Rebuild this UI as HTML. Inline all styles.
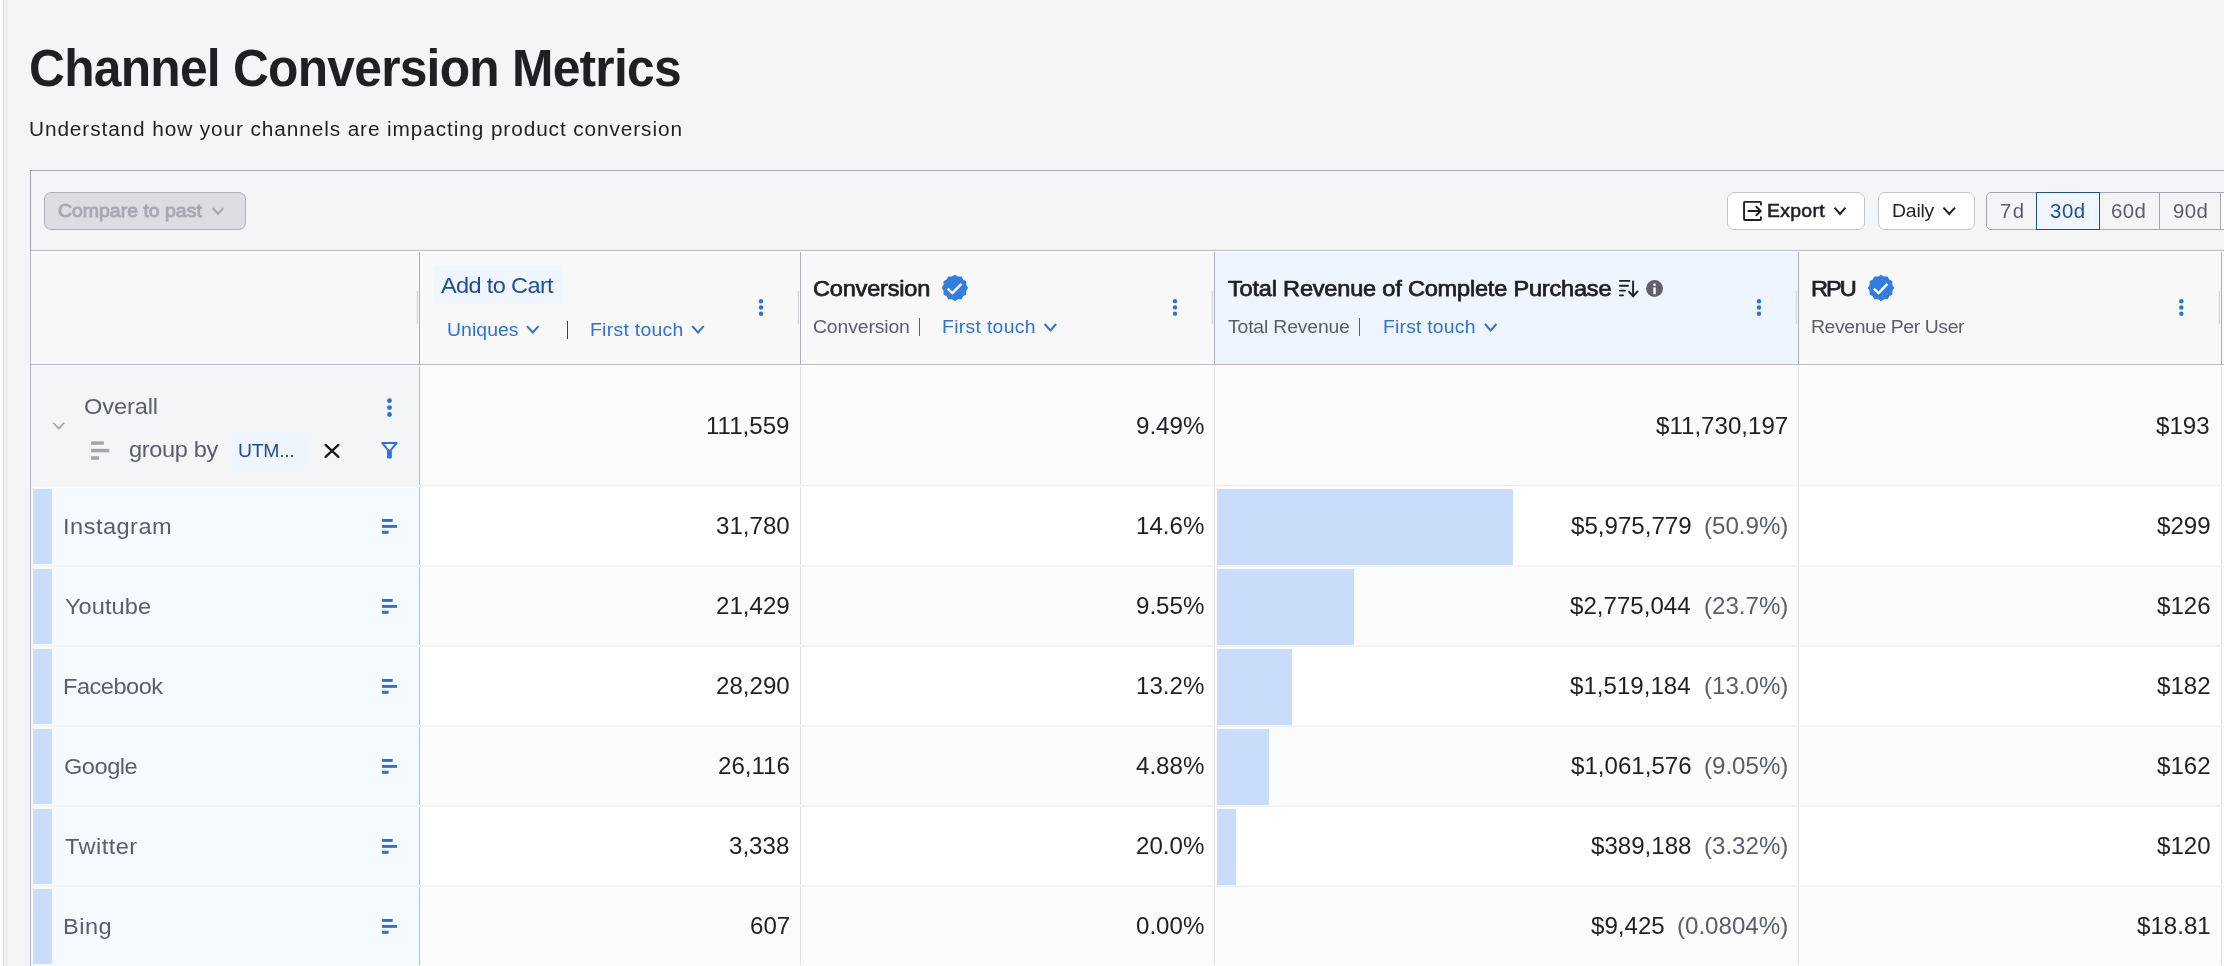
<!DOCTYPE html>
<html><head><meta charset="utf-8"><title>Channel Conversion Metrics</title>
<style>
html,body{margin:0;padding:0;overflow:hidden}
body{width:2224px;height:966px;overflow:hidden;position:relative;background:#f4f5f7;font-family:"Liberation Sans",sans-serif}
.t{position:absolute;white-space:pre;margin:0}
.r{position:absolute}
svg{position:absolute;overflow:visible}
</style></head><body><div id="app" style="position:absolute;left:0;top:0;width:2224px;height:966px;overflow:hidden;will-change:transform">
<div class="r" style="left:0px;top:0px;width:3px;height:966px;background:#ffffff;"></div>
<div class="r" style="left:3px;top:0px;width:1px;height:966px;background:#dcdde2;"></div>
<div class="r" style="left:4px;top:0px;width:4px;height:966px;background:#eff0f4;"></div>
<div class="t" style="left:29.26px;top:38.43px;font-size:51px;line-height:61px;letter-spacing:-0.774px;color:#1e2024;font-weight:700;transform:scaleX(0.975);transform-origin:0 0;">Channel Conversion Metrics</div>
<div class="t" style="left:28.90px;top:116.57px;font-size:20px;line-height:24px;letter-spacing:0.866px;color:#1e2024;transform:scaleX(1.04);transform-origin:0 0;">Understand how your channels are impacting product conversion</div>
<div class="r" style="left:30px;top:170px;width:2200px;height:1px;background:#a4a6af;"></div>
<div class="r" style="left:30px;top:170px;width:1px;height:81px;background:#a4a6af;"></div>
<div class="r" style="left:30px;top:251px;width:1px;height:720px;background:#b3b5be;"></div>
<div class="r" style="left:31px;top:250px;width:2200px;height:1px;background:#bbbdc5;"></div>
<div class="r" style="left:31px;top:251px;width:2200px;height:1px;background:#fdfdfd;"></div>
<div class="r" style="left:31px;top:252px;width:2193px;height:112px;background:#f8f8f8;"></div>
<div class="r" style="left:1215px;top:252px;width:583px;height:112px;background:#eff5fe;"></div>
<div class="r" style="left:31px;top:364px;width:2200px;height:1px;background:#bcbec7;"></div>
<div class="r" style="left:31px;top:365px;width:2200px;height:1px;background:#fefefe;"></div>
<div class="r" style="left:44px;top:192px;width:202px;height:38px;background:#dcdde2;box-sizing:border-box;border:1px solid #aeb0b9;border-radius:7px"></div>
<div class="t" style="left:58.38px;top:200.33px;font-size:18.67px;line-height:22px;letter-spacing:0.024px;color:#a6a8b2;-webkit-text-stroke:0.9px #a6a8b2;transform:scaleX(1.04);transform-origin:0 0;">Compare to past</div>
<svg style="left:0;top:0" width="1" height="1"><polyline points="212.75,208.00 218.00,214.00 223.25,208.00" fill="none" stroke="#a6a8b2" stroke-width="2" stroke-linecap="butt" stroke-linejoin="miter"/></svg>
<div class="r" style="left:1727px;top:192px;width:138px;height:38px;background:#fff;box-sizing:border-box;border:1px solid #c3c5cc;border-radius:7px"></div>
<svg style="left:0;top:0" width="1" height="1"><g fill="none" stroke="#1e2024" stroke-width="1.9" stroke-linecap="round" stroke-linejoin="round"><path d="M1760.95 204.6V202.75a0.9 0.9 0 0 0-0.9-0.9H1744.95a0.9 0.9 0 0 0-0.9 0.9V219.05a0.9 0.9 0 0 0 0.9 0.9H1760.05a0.9 0.9 0 0 0 0.9-0.9V217.2"/><path d="M1748.4 211H1760.4M1756.3 206.8L1760.7 211L1756.3 215.2"/></g></svg>
<div class="t" style="left:1766.69px;top:200.33px;font-size:18.67px;line-height:22px;letter-spacing:0.297px;color:#1e2024;-webkit-text-stroke:0.55px #1e2024;transform:scaleX(1.04);transform-origin:0 0;">Export</div>
<svg style="left:0;top:0" width="1" height="1"><polyline points="1834.50,207.60 1840.00,214.00 1845.50,207.60" fill="none" stroke="#1e2024" stroke-width="2" stroke-linecap="butt" stroke-linejoin="miter"/></svg>
<div class="r" style="left:1878px;top:192px;width:97px;height:38px;background:#fff;box-sizing:border-box;border:1px solid #c3c5cc;border-radius:7px"></div>
<div class="t" style="left:1892.01px;top:200.33px;font-size:18.67px;line-height:22px;letter-spacing:-0.199px;color:#1e2024;transform:scaleX(1.04);transform-origin:0 0;">Daily</div>
<svg style="left:0;top:0" width="1" height="1"><polyline points="1943.45,207.60 1949.20,214.00 1954.95,207.60" fill="none" stroke="#1e2024" stroke-width="2" stroke-linecap="butt" stroke-linejoin="miter"/></svg>
<div class="r" style="left:1986px;top:192px;width:240px;height:38px;background:#f4f5f7;box-sizing:border-box;border:1px solid #a4a6af;border-radius:5px 0 0 5px"></div>
<div class="r" style="left:2159px;top:193px;width:1px;height:36px;background:#a4a6af;"></div>
<div class="r" style="left:2220px;top:193px;width:1px;height:36px;background:#a4a6af;"></div>
<div class="r" style="left:2221px;top:193px;width:3px;height:36px;background:#fff;"></div>
<div class="r" style="left:2036px;top:192px;width:64px;height:38px;background:#eff6ff;box-sizing:border-box;border:1.5px solid #1f4c9c"></div>
<div class="t" style="left:1999.75px;top:198.91px;font-size:19.6px;line-height:24px;letter-spacing:1.332px;color:#5a5e6b;transform:scaleX(1.04);transform-origin:0 0;">7d</div>
<div class="t" style="left:2049.72px;top:198.91px;font-size:19.6px;line-height:24px;letter-spacing:0.567px;color:#1f4c9c;transform:scaleX(1.04);transform-origin:0 0;">30d</div>
<div class="t" style="left:2111.16px;top:198.91px;font-size:19.6px;line-height:24px;letter-spacing:0.403px;color:#5a5e6b;transform:scaleX(1.04);transform-origin:0 0;">60d</div>
<div class="t" style="left:2172.94px;top:198.91px;font-size:19.6px;line-height:24px;letter-spacing:0.365px;color:#5a5e6b;transform:scaleX(1.04);transform-origin:0 0;">90d</div>
<div class="r" style="left:419px;top:252px;width:1px;height:112px;background:#adafb8;"></div>
<div class="r" style="left:417px;top:291px;width:1px;height:33px;background:#d6d7dc;"></div>
<div class="r" style="left:416px;top:291px;width:1px;height:33px;background:#eeeef1;"></div>
<div class="r" style="left:800px;top:252px;width:1px;height:112px;background:#adafb8;"></div>
<div class="r" style="left:798px;top:291px;width:1px;height:33px;background:#d6d7dc;"></div>
<div class="r" style="left:797px;top:291px;width:1px;height:33px;background:#eeeef1;"></div>
<div class="r" style="left:1214px;top:252px;width:1px;height:112px;background:#adafb8;"></div>
<div class="r" style="left:1212px;top:291px;width:1px;height:33px;background:#d6d7dc;"></div>
<div class="r" style="left:1211px;top:291px;width:1px;height:33px;background:#eeeef1;"></div>
<div class="r" style="left:1798px;top:252px;width:1px;height:112px;background:#adafb8;"></div>
<div class="r" style="left:1796px;top:291px;width:1px;height:33px;background:#d6d7dc;"></div>
<div class="r" style="left:1795px;top:291px;width:1px;height:33px;background:#eeeef1;"></div>
<div class="r" style="left:2221px;top:252px;width:1px;height:112px;background:#adafb8;"></div>
<div class="r" style="left:2219px;top:291px;width:1px;height:33px;background:#d6d7dc;"></div>
<div class="r" style="left:2218px;top:291px;width:1px;height:33px;background:#eeeef1;"></div>
<div class="r" style="left:433px;top:265px;width:129px;height:39px;background:#eff6ff;border-radius:4px"></div>
<div class="t" style="left:441.45px;top:271.84px;font-size:22.67px;line-height:27px;letter-spacing:-0.628px;color:#1f4c9c;transform:scaleX(1.04);transform-origin:0 0;">Add to Cart</div>
<div class="t" style="left:446.50px;top:318.53px;font-size:18.67px;line-height:22px;letter-spacing:0.058px;color:#2c72de;transform:scaleX(1.04);transform-origin:0 0;">Uniques</div>
<svg style="left:0;top:0" width="1" height="1"><polyline points="527.05,326.10 532.80,332.50 538.55,326.10" fill="none" stroke="#2c72de" stroke-width="2" stroke-linecap="butt" stroke-linejoin="miter"/></svg>
<div class="r" style="left:567px;top:321px;width:1.4px;height:17.5px;background:#3f424b;"></div>
<div class="t" style="left:590.41px;top:318.53px;font-size:18.67px;line-height:22px;letter-spacing:0.261px;color:#2c72de;transform:scaleX(1.04);transform-origin:0 0;">First touch</div>
<svg style="left:0;top:0" width="1" height="1"><polyline points="692.25,326.10 698.00,332.50 703.75,326.10" fill="none" stroke="#2c72de" stroke-width="2" stroke-linecap="butt" stroke-linejoin="miter"/></svg>
<svg style="left:0;top:0" width="1" height="1"><circle cx="761" cy="301.25" r="2.2" fill="#2c72de"/><circle cx="761" cy="307.5" r="2.2" fill="#2c72de"/><circle cx="761" cy="313.75" r="2.2" fill="#2c72de"/></svg>
<div class="t" style="left:813.49px;top:274.64px;font-size:22.67px;line-height:27px;letter-spacing:-0.193px;color:#1e2024;-webkit-text-stroke:0.75px #1e2024;transform:scaleX(1.04);transform-origin:0 0;">Conversion</div>
<svg style="left:0;top:0" width="1" height="1"><polygon points="954.90,275.45 957.76,277.23 961.12,277.12 962.71,280.09 965.68,281.67 965.57,285.04 967.35,287.90 965.57,290.76 965.68,294.12 962.71,295.71 961.12,298.68 957.76,298.57 954.90,300.35 952.04,298.57 948.67,298.68 947.09,295.71 944.12,294.12 944.23,290.76 942.45,287.90 944.23,285.04 944.12,281.67 947.09,280.09 948.67,277.12 952.04,277.23" fill="#337ce0" stroke="#337ce0" stroke-width="1.3" stroke-linejoin="round"/><polyline points="947.70,288.70 952.40,293.20 961.40,283.90" fill="none" stroke="#fff" stroke-width="2.4" stroke-linejoin="round"/></svg>
<div class="t" style="left:813.31px;top:315.63px;font-size:18.67px;line-height:22px;letter-spacing:-0.135px;color:#5a5e6b;transform:scaleX(1.04);transform-origin:0 0;">Conversion</div>
<div class="r" style="left:919px;top:318px;width:1.4px;height:17.5px;background:#5a5e6b;"></div>
<div class="t" style="left:942.31px;top:315.63px;font-size:18.67px;line-height:22px;letter-spacing:0.290px;color:#2c72de;transform:scaleX(1.04);transform-origin:0 0;">First touch</div>
<svg style="left:0;top:0" width="1" height="1"><polyline points="1044.65,324.00 1050.40,330.40 1056.15,324.00" fill="none" stroke="#2c72de" stroke-width="2" stroke-linecap="butt" stroke-linejoin="miter"/></svg>
<svg style="left:0;top:0" width="1" height="1"><circle cx="1175" cy="301.15" r="2.2" fill="#2c72de"/><circle cx="1175" cy="307.4" r="2.2" fill="#2c72de"/><circle cx="1175" cy="313.65" r="2.2" fill="#2c72de"/></svg>
<div class="t" style="left:1228.46px;top:274.64px;font-size:22.67px;line-height:27px;letter-spacing:-0.197px;color:#1e2024;-webkit-text-stroke:0.75px #1e2024;transform:scaleX(1.04);transform-origin:0 0;">Total Revenue of Complete Purchase</div>
<svg style="left:1618px;top:279px" width="22" height="19" viewBox="0 0 22 19"><g stroke="#1e2024" stroke-width="1.9" fill="none" stroke-linecap="round"><path d="M1.9 1.9H11.5M1.9 6.8H10M1.9 11.6H7M1.9 16.4H5"/><path d="M15.1 1.6V17" stroke-linecap="butt"/><path d="M11 12.7L15.15 17.4L19.5 12.4" stroke-linejoin="miter"/></g></svg>
<svg style="left:0;top:0" width="1" height="1"><circle cx="1654.55" cy="288.45" r="8.45" fill="#5f626d"/><rect x="1653.3" y="287.4" width="2.5" height="6.8" fill="#fbfbfc"/><circle cx="1654.55" cy="284.7" r="1.3" fill="#fbfbfc"/></svg>
<div class="t" style="left:1228.16px;top:315.63px;font-size:18.67px;line-height:22px;letter-spacing:-0.171px;color:#5a5e6b;transform:scaleX(1.04);transform-origin:0 0;">Total Revenue</div>
<div class="r" style="left:1359px;top:318px;width:1.4px;height:17.5px;background:#5a5e6b;"></div>
<div class="t" style="left:1382.81px;top:315.63px;font-size:18.67px;line-height:22px;letter-spacing:0.184px;color:#2c72de;transform:scaleX(1.04);transform-origin:0 0;">First touch</div>
<svg style="left:0;top:0" width="1" height="1"><polyline points="1484.95,324.00 1490.70,330.40 1496.45,324.00" fill="none" stroke="#2c72de" stroke-width="2" stroke-linecap="butt" stroke-linejoin="miter"/></svg>
<svg style="left:0;top:0" width="1" height="1"><circle cx="1759" cy="301.2" r="2.2" fill="#2c72de"/><circle cx="1759" cy="307.5" r="2.2" fill="#2c72de"/><circle cx="1759" cy="313.8" r="2.2" fill="#2c72de"/></svg>
<div class="t" style="left:1811.46px;top:274.64px;font-size:22.67px;line-height:27px;letter-spacing:-1.926px;color:#1e2024;-webkit-text-stroke:0.75px #1e2024;transform:scaleX(1.04);transform-origin:0 0;">RPU</div>
<svg style="left:0;top:0" width="1" height="1"><polygon points="1881.00,275.45 1883.86,277.23 1887.22,277.12 1888.81,280.09 1891.78,281.67 1891.67,285.04 1893.45,287.90 1891.67,290.76 1891.78,294.12 1888.81,295.71 1887.22,298.68 1883.86,298.57 1881.00,300.35 1878.14,298.57 1874.78,298.68 1873.19,295.71 1870.22,294.12 1870.33,290.76 1868.55,287.90 1870.33,285.04 1870.22,281.67 1873.19,280.09 1874.78,277.12 1878.14,277.23" fill="#337ce0" stroke="#337ce0" stroke-width="1.3" stroke-linejoin="round"/><polyline points="1873.80,288.70 1878.50,293.20 1887.50,283.90" fill="none" stroke="#fff" stroke-width="2.4" stroke-linejoin="round"/></svg>
<div class="t" style="left:1811.41px;top:315.63px;font-size:18.67px;line-height:22px;letter-spacing:-0.392px;color:#5a5e6b;transform:scaleX(1.04);transform-origin:0 0;">Revenue Per User</div>
<svg style="left:0;top:0" width="1" height="1"><circle cx="2181.3" cy="301.2" r="2.2" fill="#2c72de"/><circle cx="2181.3" cy="307.5" r="2.2" fill="#2c72de"/><circle cx="2181.3" cy="313.8" r="2.2" fill="#2c72de"/></svg>
<div class="r" style="left:31px;top:366px;width:388px;height:120px;background:#f4f5f7;"></div>
<div class="r" style="left:420px;top:366px;width:1804px;height:120px;background:#fbfbfc;"></div>
<div class="r" style="left:420px;top:485px;width:1804px;height:1px;background:#edeef1;"></div>
<div class="r" style="left:31px;top:485px;width:388px;height:1px;background:#f1f2f5;"></div>
<div class="r" style="left:31px;top:487px;width:388px;height:80px;background:#f5fafe;"></div>
<div class="r" style="left:420px;top:486px;width:1804px;height:80px;background:#fff;"></div>
<div class="r" style="left:33px;top:489px;width:19px;height:75px;background:#c9dcfa;"></div>
<div class="r" style="left:1217px;top:489px;width:296px;height:76.5px;background:#c9dcfa;"></div>
<div class="t" style="left:63.12px;top:512.64px;font-size:22.67px;line-height:27px;letter-spacing:0.469px;color:#5a5e6b;transform:scaleX(1.04);transform-origin:0 0;">Instagram</div>
<svg style="left:382px;top:518.9px" width="16" height="16" viewBox="0 0 16 16"><g fill="#2a6fdb"><rect x="0" y="0" width="10.7" height="2.9"/><rect x="0" y="5.95" width="15" height="2.9"/><rect x="0" y="11.8" width="6.6" height="3"/></g></svg>
<div class="t" style="left:715.92px;top:511.89px;font-size:23.4px;line-height:28px;letter-spacing:0.000px;color:#1e2024;transform:scaleX(1.03);transform-origin:0 0;">31,780</div>
<div class="t" style="left:1135.92px;top:511.89px;font-size:23.4px;line-height:28px;letter-spacing:0.000px;color:#1e2024;transform:scaleX(1.03);transform-origin:0 0;">14.6%</div>
<div class="t" style="left:1703.70px;top:511.89px;font-size:23.4px;line-height:28px;letter-spacing:0.000px;color:#5a5e6b;transform:scaleX(1.03);transform-origin:0 0;">(50.9%)</div>
<div class="t" style="left:1570.61px;top:511.89px;font-size:23.4px;line-height:28px;letter-spacing:0.000px;color:#1e2024;transform:scaleX(1.03);transform-origin:0 0;">$5,975,779</div>
<div class="t" style="left:2156.82px;top:511.89px;font-size:23.4px;line-height:28px;letter-spacing:0.000px;color:#1e2024;transform:scaleX(1.03);transform-origin:0 0;">$299</div>
<div class="r" style="left:31px;top:566px;width:388px;height:80px;background:#f5fafe;"></div>
<div class="r" style="left:420px;top:566px;width:1804px;height:80px;background:#fbfbfb;"></div>
<div class="r" style="left:33px;top:569px;width:19px;height:75px;background:#c9dcfa;"></div>
<div class="r" style="left:1217px;top:569px;width:137px;height:76.5px;background:#c9dcfa;"></div>
<div class="r" style="left:420px;top:565px;width:1804px;height:1px;background:#f4f5f7;"></div>
<div class="r" style="left:420px;top:566px;width:1804px;height:1px;background:#f1f2f4;"></div>
<div class="r" style="left:31px;top:565px;width:388px;height:1px;background:#f2f5f9;"></div>
<div class="r" style="left:31px;top:566px;width:388px;height:1px;background:#f1f4f8;"></div>
<div class="t" style="left:64.78px;top:592.64px;font-size:22.67px;line-height:27px;letter-spacing:0.063px;color:#5a5e6b;transform:scaleX(1.04);transform-origin:0 0;">Youtube</div>
<svg style="left:382px;top:598.9px" width="16" height="16" viewBox="0 0 16 16"><g fill="#2a6fdb"><rect x="0" y="0" width="10.7" height="2.9"/><rect x="0" y="5.95" width="15" height="2.9"/><rect x="0" y="11.8" width="6.6" height="3"/></g></svg>
<div class="t" style="left:716.12px;top:591.89px;font-size:23.4px;line-height:28px;letter-spacing:0.000px;color:#1e2024;transform:scaleX(1.03);transform-origin:0 0;">21,429</div>
<div class="t" style="left:1135.92px;top:591.89px;font-size:23.4px;line-height:28px;letter-spacing:0.000px;color:#1e2024;transform:scaleX(1.03);transform-origin:0 0;">9.55%</div>
<div class="t" style="left:1703.70px;top:591.89px;font-size:23.4px;line-height:28px;letter-spacing:0.000px;color:#5a5e6b;transform:scaleX(1.03);transform-origin:0 0;">(23.7%)</div>
<div class="t" style="left:1570.17px;top:591.89px;font-size:23.4px;line-height:28px;letter-spacing:0.000px;color:#1e2024;transform:scaleX(1.03);transform-origin:0 0;">$2,775,044</div>
<div class="t" style="left:2156.74px;top:591.89px;font-size:23.4px;line-height:28px;letter-spacing:0.000px;color:#1e2024;transform:scaleX(1.03);transform-origin:0 0;">$126</div>
<div class="r" style="left:31px;top:646px;width:388px;height:80px;background:#f5fafe;"></div>
<div class="r" style="left:420px;top:646px;width:1804px;height:80px;background:#fff;"></div>
<div class="r" style="left:33px;top:649px;width:19px;height:75px;background:#c9dcfa;"></div>
<div class="r" style="left:1217px;top:649px;width:75px;height:76.5px;background:#c9dcfa;"></div>
<div class="r" style="left:420px;top:645px;width:1804px;height:1px;background:#f3f4f6;"></div>
<div class="r" style="left:420px;top:646px;width:1804px;height:1px;background:#f1f2f4;"></div>
<div class="r" style="left:31px;top:645px;width:388px;height:1px;background:#f2f5f9;"></div>
<div class="r" style="left:31px;top:646px;width:388px;height:1px;background:#f1f4f8;"></div>
<div class="t" style="left:63.37px;top:672.64px;font-size:22.67px;line-height:27px;letter-spacing:-0.459px;color:#5a5e6b;transform:scaleX(1.04);transform-origin:0 0;">Facebook</div>
<svg style="left:382px;top:678.9px" width="16" height="16" viewBox="0 0 16 16"><g fill="#2a6fdb"><rect x="0" y="0" width="10.7" height="2.9"/><rect x="0" y="5.95" width="15" height="2.9"/><rect x="0" y="11.8" width="6.6" height="3"/></g></svg>
<div class="t" style="left:715.92px;top:671.89px;font-size:23.4px;line-height:28px;letter-spacing:0.000px;color:#1e2024;transform:scaleX(1.03);transform-origin:0 0;">28,290</div>
<div class="t" style="left:1135.92px;top:671.89px;font-size:23.4px;line-height:28px;letter-spacing:0.000px;color:#1e2024;transform:scaleX(1.03);transform-origin:0 0;">13.2%</div>
<div class="t" style="left:1703.70px;top:671.89px;font-size:23.4px;line-height:28px;letter-spacing:0.000px;color:#5a5e6b;transform:scaleX(1.03);transform-origin:0 0;">(13.0%)</div>
<div class="t" style="left:1570.17px;top:671.89px;font-size:23.4px;line-height:28px;letter-spacing:0.000px;color:#1e2024;transform:scaleX(1.03);transform-origin:0 0;">$1,519,184</div>
<div class="t" style="left:2156.89px;top:671.89px;font-size:23.4px;line-height:28px;letter-spacing:0.000px;color:#1e2024;transform:scaleX(1.03);transform-origin:0 0;">$182</div>
<div class="r" style="left:31px;top:726px;width:388px;height:80px;background:#f5fafe;"></div>
<div class="r" style="left:420px;top:726px;width:1804px;height:80px;background:#fbfbfb;"></div>
<div class="r" style="left:33px;top:729px;width:19px;height:75px;background:#c9dcfa;"></div>
<div class="r" style="left:1217px;top:729px;width:52px;height:76.5px;background:#c9dcfa;"></div>
<div class="r" style="left:420px;top:725px;width:1804px;height:1px;background:#f4f5f7;"></div>
<div class="r" style="left:420px;top:726px;width:1804px;height:1px;background:#f1f2f4;"></div>
<div class="r" style="left:31px;top:725px;width:388px;height:1px;background:#f2f5f9;"></div>
<div class="r" style="left:31px;top:726px;width:388px;height:1px;background:#f1f4f8;"></div>
<div class="t" style="left:64.11px;top:752.64px;font-size:22.67px;line-height:27px;letter-spacing:-0.441px;color:#5a5e6b;transform:scaleX(1.04);transform-origin:0 0;">Google</div>
<svg style="left:382px;top:758.9px" width="16" height="16" viewBox="0 0 16 16"><g fill="#2a6fdb"><rect x="0" y="0" width="10.7" height="2.9"/><rect x="0" y="5.95" width="15" height="2.9"/><rect x="0" y="11.8" width="6.6" height="3"/></g></svg>
<div class="t" style="left:717.83px;top:751.89px;font-size:23.4px;line-height:28px;letter-spacing:0.000px;color:#1e2024;transform:scaleX(1.03);transform-origin:0 0;">26,116</div>
<div class="t" style="left:1135.92px;top:751.89px;font-size:23.4px;line-height:28px;letter-spacing:0.000px;color:#1e2024;transform:scaleX(1.03);transform-origin:0 0;">4.88%</div>
<div class="t" style="left:1703.70px;top:751.89px;font-size:23.4px;line-height:28px;letter-spacing:0.000px;color:#5a5e6b;transform:scaleX(1.03);transform-origin:0 0;">(9.05%)</div>
<div class="t" style="left:1570.53px;top:751.89px;font-size:23.4px;line-height:28px;letter-spacing:0.000px;color:#1e2024;transform:scaleX(1.03);transform-origin:0 0;">$1,061,576</div>
<div class="t" style="left:2156.89px;top:751.89px;font-size:23.4px;line-height:28px;letter-spacing:0.000px;color:#1e2024;transform:scaleX(1.03);transform-origin:0 0;">$162</div>
<div class="r" style="left:31px;top:806px;width:388px;height:80px;background:#f5fafe;"></div>
<div class="r" style="left:420px;top:806px;width:1804px;height:80px;background:#fff;"></div>
<div class="r" style="left:33px;top:809px;width:19px;height:75px;background:#c9dcfa;"></div>
<div class="r" style="left:1217px;top:809px;width:19px;height:76.5px;background:#c9dcfa;"></div>
<div class="r" style="left:420px;top:805px;width:1804px;height:1px;background:#f3f4f6;"></div>
<div class="r" style="left:420px;top:806px;width:1804px;height:1px;background:#f1f2f4;"></div>
<div class="r" style="left:31px;top:805px;width:388px;height:1px;background:#f2f5f9;"></div>
<div class="r" style="left:31px;top:806px;width:388px;height:1px;background:#f1f4f8;"></div>
<div class="t" style="left:64.77px;top:832.64px;font-size:22.67px;line-height:27px;letter-spacing:0.447px;color:#5a5e6b;transform:scaleX(1.04);transform-origin:0 0;">Twitter</div>
<svg style="left:382px;top:838.9px" width="16" height="16" viewBox="0 0 16 16"><g fill="#2a6fdb"><rect x="0" y="0" width="10.7" height="2.9"/><rect x="0" y="5.95" width="15" height="2.9"/><rect x="0" y="11.8" width="6.6" height="3"/></g></svg>
<div class="t" style="left:729.43px;top:831.89px;font-size:23.4px;line-height:28px;letter-spacing:0.000px;color:#1e2024;transform:scaleX(1.03);transform-origin:0 0;">3,338</div>
<div class="t" style="left:1135.92px;top:831.89px;font-size:23.4px;line-height:28px;letter-spacing:0.000px;color:#1e2024;transform:scaleX(1.03);transform-origin:0 0;">20.0%</div>
<div class="t" style="left:1703.70px;top:831.89px;font-size:23.4px;line-height:28px;letter-spacing:0.000px;color:#5a5e6b;transform:scaleX(1.03);transform-origin:0 0;">(3.32%)</div>
<div class="t" style="left:1590.62px;top:831.89px;font-size:23.4px;line-height:28px;letter-spacing:0.000px;color:#1e2024;transform:scaleX(1.03);transform-origin:0 0;">$389,188</div>
<div class="t" style="left:2156.62px;top:831.89px;font-size:23.4px;line-height:28px;letter-spacing:0.000px;color:#1e2024;transform:scaleX(1.03);transform-origin:0 0;">$120</div>
<div class="r" style="left:31px;top:886px;width:388px;height:80px;background:#f5fafe;"></div>
<div class="r" style="left:420px;top:886px;width:1804px;height:80px;background:#fbfbfb;"></div>
<div class="r" style="left:33px;top:889px;width:19px;height:75px;background:#c9dcfa;"></div>
<div class="r" style="left:420px;top:885px;width:1804px;height:1px;background:#f4f5f7;"></div>
<div class="r" style="left:420px;top:886px;width:1804px;height:1px;background:#f1f2f4;"></div>
<div class="r" style="left:31px;top:885px;width:388px;height:1px;background:#f2f5f9;"></div>
<div class="r" style="left:31px;top:886px;width:388px;height:1px;background:#f1f4f8;"></div>
<div class="t" style="left:63.37px;top:912.64px;font-size:22.67px;line-height:27px;letter-spacing:0.502px;color:#5a5e6b;transform:scaleX(1.04);transform-origin:0 0;">Bing</div>
<svg style="left:382px;top:918.9px" width="16" height="16" viewBox="0 0 16 16"><g fill="#2a6fdb"><rect x="0" y="0" width="10.7" height="2.9"/><rect x="0" y="5.95" width="15" height="2.9"/><rect x="0" y="11.8" width="6.6" height="3"/></g></svg>
<div class="t" style="left:749.70px;top:911.89px;font-size:23.4px;line-height:28px;letter-spacing:0.000px;color:#1e2024;transform:scaleX(1.03);transform-origin:0 0;">607</div>
<div class="t" style="left:1135.92px;top:911.89px;font-size:23.4px;line-height:28px;letter-spacing:0.000px;color:#1e2024;transform:scaleX(1.03);transform-origin:0 0;">0.00%</div>
<div class="t" style="left:1676.89px;top:911.89px;font-size:23.4px;line-height:28px;letter-spacing:0.000px;color:#5a5e6b;transform:scaleX(1.03);transform-origin:0 0;">(0.0804%)</div>
<div class="t" style="left:1590.58px;top:911.89px;font-size:23.4px;line-height:28px;letter-spacing:0.000px;color:#1e2024;transform:scaleX(1.03);transform-origin:0 0;">$9,425</div>
<div class="t" style="left:2136.76px;top:911.89px;font-size:23.4px;line-height:28px;letter-spacing:0.000px;color:#1e2024;transform:scaleX(1.03);transform-origin:0 0;">$18.81</div>
<div class="r" style="left:419px;top:367px;width:1px;height:118px;background:#bbbdc5;"></div>
<div class="r" style="left:800px;top:367px;width:1px;height:118px;background:#dfe0e4;"></div>
<div class="r" style="left:1214px;top:367px;width:1px;height:118px;background:#dfe0e4;"></div>
<div class="r" style="left:1798px;top:367px;width:1px;height:118px;background:#dfe0e4;"></div>
<div class="r" style="left:2221px;top:367px;width:1px;height:118px;background:#dfe0e4;"></div>
<div class="r" style="left:419px;top:487px;width:1px;height:78px;background:#bbbdc5;"></div>
<div class="r" style="left:800px;top:487px;width:1px;height:78px;background:#dfe0e4;"></div>
<div class="r" style="left:1214px;top:487px;width:1px;height:78px;background:#dfe0e4;"></div>
<div class="r" style="left:1798px;top:487px;width:1px;height:78px;background:#dfe0e4;"></div>
<div class="r" style="left:2221px;top:487px;width:1px;height:78px;background:#dfe0e4;"></div>
<div class="r" style="left:419px;top:567px;width:1px;height:78px;background:#bbbdc5;"></div>
<div class="r" style="left:800px;top:567px;width:1px;height:78px;background:#dfe0e4;"></div>
<div class="r" style="left:1214px;top:567px;width:1px;height:78px;background:#dfe0e4;"></div>
<div class="r" style="left:1798px;top:567px;width:1px;height:78px;background:#dfe0e4;"></div>
<div class="r" style="left:2221px;top:567px;width:1px;height:78px;background:#dfe0e4;"></div>
<div class="r" style="left:419px;top:647px;width:1px;height:78px;background:#bbbdc5;"></div>
<div class="r" style="left:800px;top:647px;width:1px;height:78px;background:#dfe0e4;"></div>
<div class="r" style="left:1214px;top:647px;width:1px;height:78px;background:#dfe0e4;"></div>
<div class="r" style="left:1798px;top:647px;width:1px;height:78px;background:#dfe0e4;"></div>
<div class="r" style="left:2221px;top:647px;width:1px;height:78px;background:#dfe0e4;"></div>
<div class="r" style="left:419px;top:727px;width:1px;height:78px;background:#bbbdc5;"></div>
<div class="r" style="left:800px;top:727px;width:1px;height:78px;background:#dfe0e4;"></div>
<div class="r" style="left:1214px;top:727px;width:1px;height:78px;background:#dfe0e4;"></div>
<div class="r" style="left:1798px;top:727px;width:1px;height:78px;background:#dfe0e4;"></div>
<div class="r" style="left:2221px;top:727px;width:1px;height:78px;background:#dfe0e4;"></div>
<div class="r" style="left:419px;top:807px;width:1px;height:78px;background:#bbbdc5;"></div>
<div class="r" style="left:800px;top:807px;width:1px;height:78px;background:#dfe0e4;"></div>
<div class="r" style="left:1214px;top:807px;width:1px;height:78px;background:#dfe0e4;"></div>
<div class="r" style="left:1798px;top:807px;width:1px;height:78px;background:#dfe0e4;"></div>
<div class="r" style="left:2221px;top:807px;width:1px;height:78px;background:#dfe0e4;"></div>
<div class="r" style="left:419px;top:887px;width:1px;height:78px;background:#bbbdc5;"></div>
<div class="r" style="left:800px;top:887px;width:1px;height:78px;background:#dfe0e4;"></div>
<div class="r" style="left:1214px;top:887px;width:1px;height:78px;background:#dfe0e4;"></div>
<div class="r" style="left:1798px;top:887px;width:1px;height:78px;background:#dfe0e4;"></div>
<div class="r" style="left:2221px;top:887px;width:1px;height:78px;background:#dfe0e4;"></div>
<div class="t" style="left:83.78px;top:393.44px;font-size:22.67px;line-height:27px;letter-spacing:-0.094px;color:#5a5e6b;transform:scaleX(1.04);transform-origin:0 0;">Overall</div>
<svg style="left:0;top:0" width="1" height="1"><circle cx="389.5" cy="400.70000000000005" r="2.4" fill="#2c72de"/><circle cx="389.5" cy="407.6" r="2.4" fill="#2c72de"/><circle cx="389.5" cy="414.5" r="2.4" fill="#2c72de"/></svg>
<svg style="left:0;top:0" width="1" height="1"><polyline points="53.20,422.70 58.70,428.50 64.20,422.70" fill="none" stroke="#9d9fa8" stroke-width="1.6" stroke-linecap="butt" stroke-linejoin="miter"/></svg>
<svg style="left:90.8px;top:441px" width="19" height="19" viewBox="0 0 19 19"><g fill="#a4a6af"><rect x="0.1" y="0.3" width="12.8" height="3.5"/><rect x="0.1" y="7.8" width="18.2" height="3.5"/><rect x="0.1" y="15.2" width="7.9" height="3.6"/></g></svg>
<div class="t" style="left:128.51px;top:435.84px;font-size:22.67px;line-height:27px;letter-spacing:-0.346px;color:#5a5e6b;transform:scaleX(1.04);transform-origin:0 0;">group by</div>
<div class="r" style="left:231px;top:432px;width:75px;height:39px;background:#eff5fd;border-radius:4px"></div>
<div class="t" style="left:238.30px;top:440.23px;font-size:18.67px;line-height:22px;letter-spacing:-0.283px;color:#1f4c9c;transform:scaleX(1.04);transform-origin:0 0;">UTM...</div>
<svg style="left:0;top:0" width="1" height="1"><path d="M325.6 444.9L338.4 456.9M338.4 444.9L325.6 456.9" stroke="#17181c" stroke-width="2.3" stroke-linecap="round" fill="none"/></svg>
<svg style="left:0;top:0" width="1" height="1"><path d="M382.3 443.1H396.6L389.45 451.6Z" fill="none" stroke="#2c72de" stroke-width="2" stroke-linejoin="round"/><path d="M387.1 450.6H391.8V457.3a1.2 1.2 0 0 1-1.2 1.2H388.3a1.2 1.2 0 0 1-1.2-1.2Z" fill="#2c72de"/></svg>
<div class="t" style="left:706.30px;top:411.79px;font-size:23.4px;line-height:28px;letter-spacing:0.000px;color:#1e2024;transform:scaleX(1.03);transform-origin:0 0;">111,559</div>
<div class="t" style="left:1135.92px;top:411.79px;font-size:23.4px;line-height:28px;letter-spacing:0.000px;color:#1e2024;transform:scaleX(1.03);transform-origin:0 0;">9.49%</div>
<div class="t" style="left:1655.57px;top:411.79px;font-size:23.4px;line-height:28px;letter-spacing:0.000px;color:#1e2024;transform:scaleX(1.03);transform-origin:0 0;">$11,730,197</div>
<div class="t" style="left:2156.24px;top:411.79px;font-size:23.4px;line-height:28px;letter-spacing:0.000px;color:#1e2024;transform:scaleX(1.03);transform-origin:0 0;">$193</div>
</div></body></html>
